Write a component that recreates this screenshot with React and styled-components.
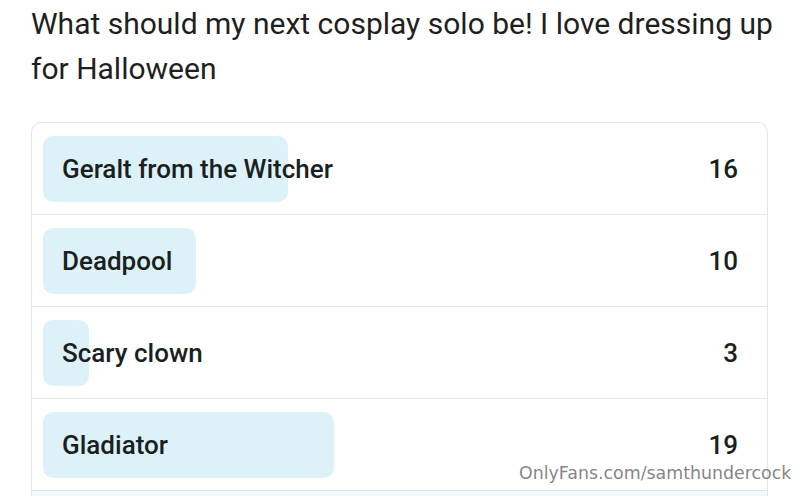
import React from "react";
import styled, { createGlobalStyle } from "styled-components";

const Global = createGlobalStyle`
  html, body { margin: 0; padding: 0; background: #ffffff; }
  body { width: 800px; height: 496px; overflow: hidden; font-family: Roboto, "Liberation Sans", sans-serif; }
`;

const Page = styled.div`
  position: relative;
  width: 800px;
  height: 496px;
  overflow: hidden;
  padding: 1px 0 0 31px;
  box-sizing: border-box;
`;

const Title = styled.p`
  margin: 0;
  width: 745px;
  font-family: Roboto, "Liberation Sans", sans-serif;
  font-size: 30px;
  line-height: 45px;
  font-weight: 400;
  color: #1f1f1f;
`;

const Card = styled.div`
  margin-top: 31px;
  width: 737px;
  box-sizing: border-box;
  border: 1px solid #e4e4e4;
  border-bottom: none;
  border-radius: 10px 10px 0 0;
  display: flex;
  flex-direction: column;
`;

const Row = styled.div`
  display: grid;
  grid-template-columns: 1fr auto;
  align-items: center;
  height: 91px;
  padding: 0 29px 0 11px;
  border-bottom: 1px solid #e4e4e4;
  background: ${(p) => (p.$faint ? "#f3f9fa" : "transparent")};
`;

const Bar = styled.div`
  grid-area: 1 / 1;
  justify-self: start;
  height: 66px;
  border-radius: 10px;
  background: #dcf2f8;
`;

const Label = styled.span`
  grid-area: 1 / 1;
  padding-left: 19px;
  font-size: 26px;
  font-weight: 500;
  color: #1a1f22;
  position: relative;
`;

const Count = styled.span`
  grid-area: 1 / 2;
  font-size: 26px;
  font-weight: 500;
  color: #1a1f22;
`;

const Watermark = styled.div`
  position: absolute;
  left: 519px;
  top: 463px;
  font-family: "DejaVu Sans", sans-serif;
  font-size: 17.4px;
  color: rgba(110, 110, 110, 0.85);
  white-space: nowrap;
`;

const options = [
  { label: "Geralt from the Witcher", votes: 16 },
  { label: "Deadpool", votes: 10 },
  { label: "Scary clown", votes: 3 },
  { label: "Gladiator", votes: 19 },
];

const PX_PER_VOTE = 15.3;

export default function App() {
  return (
    <>
      <Global />
      <Page>
        <Title>What should my next cosplay solo be! I love dressing up for Halloween</Title>
        <Card>
          {options.map((o) => (
            <Row key={o.label}>
              <Bar style={{ width: `${o.votes * PX_PER_VOTE}px` }} />
              <Label>{o.label}</Label>
              <Count>{o.votes}</Count>
            </Row>
          ))}
          <Row $faint />
        </Card>
        <Watermark>OnlyFans.com/samthundercock</Watermark>
      </Page>
    </>
  );
}
